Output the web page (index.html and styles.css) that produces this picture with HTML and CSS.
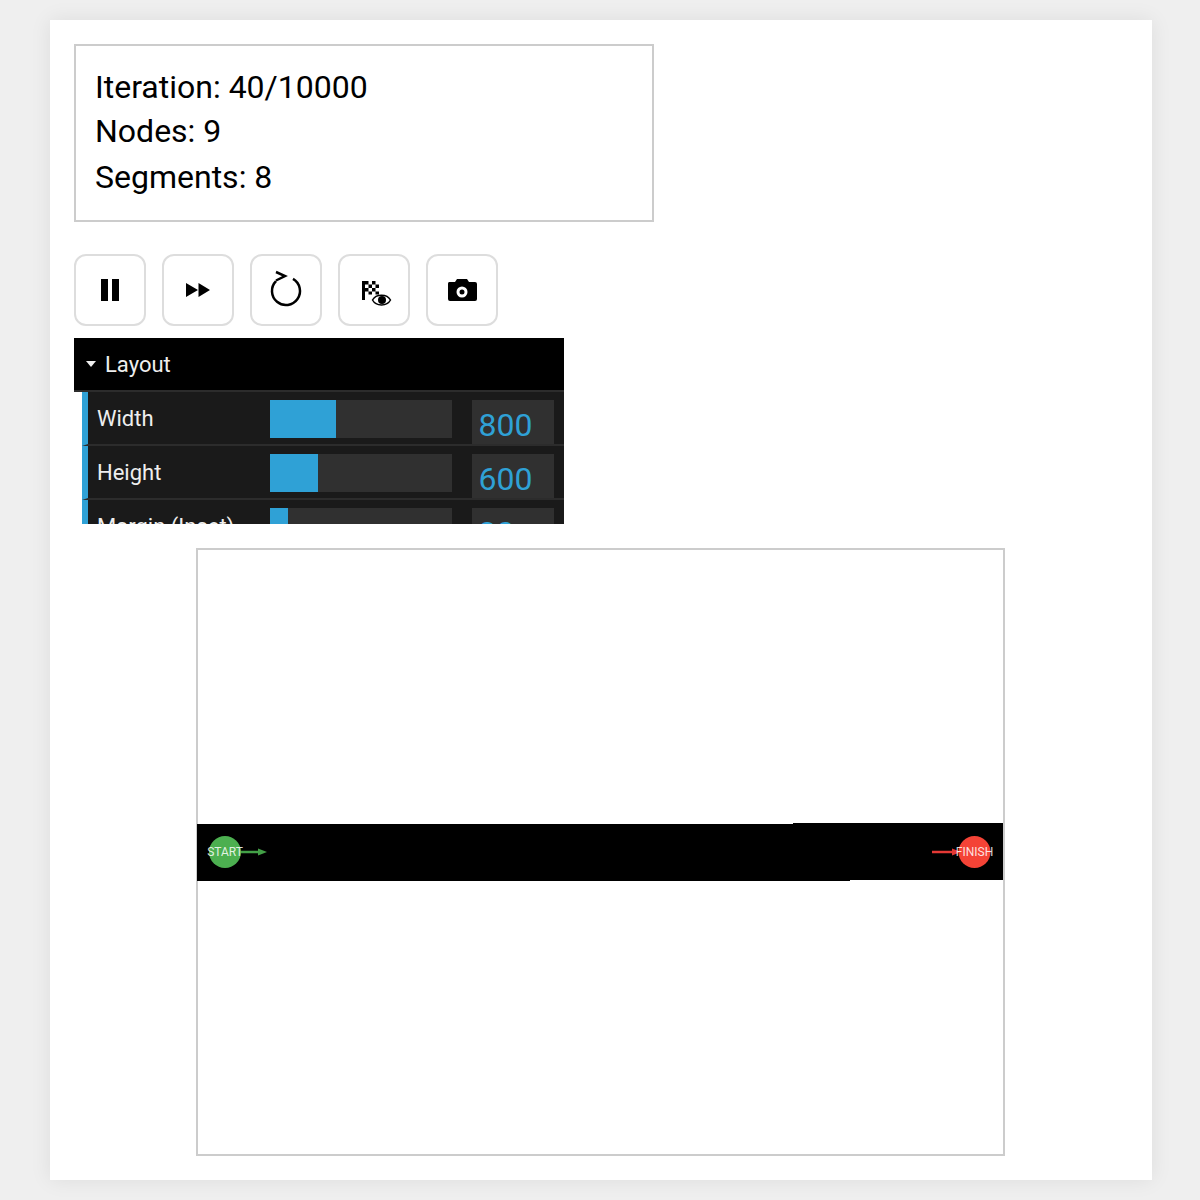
FILE: index.html
```html
<!doctype html>
<html lang="en">
<head>
    <meta charset="UTF-8">
    <title>Path finding</title>
    <link rel="stylesheet" href="styles.css">
</head>
<body>
<div class="card">
    <div class="stats">
        <div class="stat-line">Iteration: 40/10000</div>
        <div class="stat-line">Nodes: 9</div>
        <div class="stat-line">Segments: 8</div>
    </div>
    <div class="btn-row">
        <button class="btn" type="button">
            <svg width="24" height="24" viewBox="0 0 24 24"><rect x="3" y="1" width="7" height="22"/><rect x="14" y="1" width="7" height="22"/></svg>
        </button>
        <button class="btn" type="button">
            <svg width="28" height="24" viewBox="0 0 28 24"><path d="M2 5l12 7-12 7zM14.500 5l11.500 7-11.500 7z"/></svg>
        </button>
        <button class="btn" type="button">
            <svg width="36" height="40" viewBox="0 0 36 40"><path class="ring" d="M25 8.900A14 14 0 1 1 8 11.200M8 10.500L17 6 8 2"/></svg>
        </button>
        <button class="btn" type="button">
            <svg width="36" height="32" viewBox="0 0 36 32">
                <rect x="6" y="7" width="3" height="19"/>
                <path d="M9 7h3.500v3.500h-3.500zM16 7h3.500v3.500h-3.500zM12.500 10.500h3.500v3.500h-3.500zM19.500 10.500h3.500v3.500h-3.500zM9 14h3.500v3.500h-3.500zM16 14h3.500v3.500h-3.500zM12.500 17.500h3.500v3h-3.500zM19.500 17.500h3.500v3h-3.500z"/>
                <path class="eye" d="M16.500 26C20 19.500 31 19.500 34.500 26 31 32.500 20 32.500 16.500 26Z"/>
                <circle cx="26" cy="26" r="4"/>
            </svg>
        </button>
        <button class="btn" type="button">
            <svg width="30" height="24" viewBox="0 0 30 24">
                <path d="M2 4h6l2-3h10l2 3h6a2 2 0 0 1 2 2v15a2 2 0 0 1-2 2H3a2 2 0 0 1-2-2V6a2 2 0 0 1 1-2z"/>
                <circle class="lens" cx="15" cy="14" r="4"/>
            </svg>
        </button>
    </div>
    <div class="gui">
        <div class="gui-title"><span class="caret"></span>Layout</div>
        <div class="gui-rows">
            <div class="gui-row">
                <div class="gui-label">Width</div>
                <div class="slider"><div class="slider-fill" style="width:36%"></div></div>
                <div class="gui-num">800</div>
            </div>
            <div class="gui-row">
                <div class="gui-label">Height</div>
                <div class="slider"><div class="slider-fill" style="width:26.4%"></div></div>
                <div class="gui-num">600</div>
            </div>
            <div class="gui-row">
                <div class="gui-label">Margin (Inset)</div>
                <div class="slider"><div class="slider-fill" style="width:10%"></div></div>
                <div class="gui-num">30</div>
            </div>
        </div>
    </div>
    <div class="canvas-box">
        <svg class="canvas" width="806" height="604" viewBox="0 0 806 604">
            <path d="M0 275H596V274H806V331H653V332H0Z"/>
            <path class="arrow-start" d="M28 303H64"/>
            <path class="head-start" d="M61 299.500L70 303 61 306.500Z"/>
            <circle class="node-start" cx="28" cy="303" r="16"/>
            <path class="arrow-finish" d="M735 303H758"/>
            <path class="head-finish" d="M755 299.500L764 303 755 306.500Z"/>
            <circle class="node-finish" cx="777.500" cy="303" r="16"/>
            <text class="node-text" x="28" y="307">START</text>
            <text class="node-text" x="777.500" y="307">FINISH</text>
        </svg>
    </div>
</div>
</body>
</html>
```

FILE: styles.css
```css
html, body {
    margin: 0;
    padding: 0;
}
body {
    background-color: #efefef;
    font-family: Roboto, "Liberation Sans", sans-serif;
    color: #000;
}
.card {
    width: 1102px;
    height: 1160px;
    margin: 20px 0 20px 50px;
    padding: 24px;
    box-sizing: border-box;
    background-color: #fff;
    box-shadow: 0 0 20px rgba(0, 0, 0, 0.08);
}
.stats {
    width: 580px;
    height: 178px;
    padding: 19px 19px 0;
    box-sizing: border-box;
    border: 2px solid #ccc;
    font-size: 32px;
}
.stat-line {
    line-height: 45px;
}
/* lines in the original are not evenly spaced */
.stat-line:nth-child(2) {
    margin-top: -1px;
}
.stat-line:nth-child(3) {
    margin-top: 1px;
}
.btn-row {
    display: flex;
    gap: 16px;
    margin-top: 32px;
}
.btn {
    width: 72px;
    height: 72px;
    padding: 0;
    display: flex;
    align-items: center;
    justify-content: center;
    background-color: #fff;
    border: 2px solid #ddd;
    border-radius: 12px;
}
.ring {
    fill: none;
    stroke: #000;
    stroke-width: 2.500;
}
.eye {
    fill: #fff;
    stroke: #000;
    stroke-width: 1.500;
}
.lens {
    fill: #000;
    stroke: #fff;
    stroke-width: 3;
}
.gui {
    width: 490px;
    height: 186px;
    margin-top: 12px;
    overflow: hidden;
}
.gui-title {
    display: flex;
    align-items: center;
    height: 52px;
    padding-left: 12px;
    background-color: #000;
    border-bottom: 2px solid #2c2c2c;
    color: #eee;
    font-size: 22px;
}
.caret {
    width: 0;
    height: 0;
    margin-right: 9px;
    border-left: 5px solid transparent;
    border-right: 5px solid transparent;
    border-top: 6px solid #eee;
}
.gui-rows {
    margin-left: 8px;
}
.gui-row {
    display: flex;
    height: 52px;
    overflow: hidden;
    background-color: #1a1a1a;
    border-left: 6px solid #2fa1d6;
    border-bottom: 2px solid #2c2c2c;
    color: #eee;
    font-size: 22px;
}
.gui-label {
    width: 173px;
    padding-left: 9px;
    line-height: 54px;
}
.slider {
    width: 182px;
    height: 38px;
    margin-top: 8px;
    background-color: #303030;
}
.slider-fill {
    height: 100%;
    background-color: #2fa1d6;
}
.gui-num {
    width: 75.500px;
    height: 44px;
    margin: 8px 0 0 20px;
    padding-left: 6.500px;
    background-color: #303030;
    color: #2fa1d6;
    font-size: 32px;
    line-height: 50px;
}
.canvas-box {
    width: 809px;
    height: 608px;
    margin: 24px 0 0 122px;
    box-sizing: border-box;
    border: 2px solid #ccc;
}
.canvas {
    display: block;
    margin: -1px 0 0 -1px;
}
.arrow-start {
    stroke: #43a047;
    stroke-width: 2.500;
}
.head-start {
    fill: #43a047;
}
.node-start {
    fill: #4caf50;
}
.arrow-finish {
    stroke: #e53935;
    stroke-width: 2.500;
}
.head-finish {
    fill: #e53935;
}
.node-finish {
    fill: #f44336;
}
.node-text {
    fill: #fff;
    fill-opacity: 0.85;
    font-size: 12px;
    text-anchor: middle;
}
```
